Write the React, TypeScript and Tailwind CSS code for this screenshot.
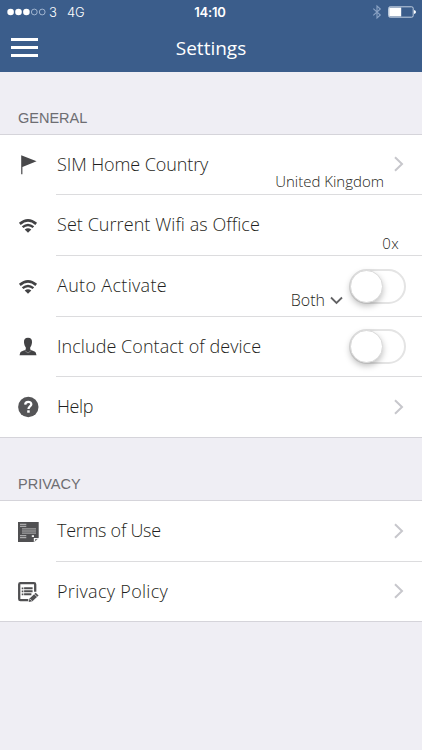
import React, { useState } from "react";

const FlagIcon = () => (
  <svg width="22" height="22" viewBox="0 0 22 22" fill="#48484a">
    <path d="M4.2 1.2L19.6 7.2L5.4 13V20.3H4.2Z" />
  </svg>
);

const WifiIcon = () => (
  <svg width="22" height="22" viewBox="0 0 22 22" fill="none" stroke="#424244">
    <path d="M2.8 8.9Q11 1.9 19.2 8.9" strokeWidth="2.7" />
    <path d="M5.6 12.2Q11 7.6 16.4 12.2" strokeWidth="2.4" />
    <path d="M7.7 14.4Q11 11.9 14.3 14.4L11 17.8Z" fill="#424244" stroke="none" />
  </svg>
);

const PersonIcon = () => (
  <svg width="22" height="22" viewBox="0 0 22 22" fill="#424244">
    <path d="M11 1.8C8 1.8 6.7 3.8 7 6.6C7.2 8.8 8 10.5 8.8 11.5V13.3C8 14.8 4 15 3.3 16.6L2.5 19.3H19.5L18.7 16.6C18 15 14 14.8 13.2 13.3V11.5C14 10.5 14.8 8.8 15 6.6C15.3 3.8 14 1.8 11 1.8Z" />
    <path d="M8.1 14.8L11 17L13.9 14.8" fill="none" stroke="#aaa" strokeWidth="0.6" />
  </svg>
);

const HelpIcon = () => (
  <svg width="22" height="22" viewBox="0 0 22 22" fill="none">
    <circle cx="11.3" cy="11" r="10.2" fill="#555557" />
    <path
      d="M8.2 8.6C8.3 4.9 14.3 4.9 14.3 8.3C14.3 10.5 11.5 10.5 11.5 13"
      stroke="#fff"
      strokeWidth="2.3"
    />
    <rect x="10.2" y="14.3" width="2.5" height="2.4" fill="#fff" />
  </svg>
);

const TermsIcon = () => (
  <svg width="22" height="22" viewBox="0 0 22 22" fill="none">
    <path d="M1 1H21.7V16.8L17.2 21H1Z" fill="#505052" />
    <path d="M3 3.3H9.3M3 5.3H9.3M3 14.7H9.3M3 16.7H9.3" stroke="#ddd" strokeWidth="0.8" />
    <path d="M5 7.9H19M5 10H19M5 12.1H19" stroke="#b5b5b5" strokeWidth="1" />
    <path d="M14.8 14.2H17V16H14.8Z" fill="#eee" />
    <path d="M16.8 21.2V17H21.8Z" fill="#fff" />
    <path d="M17.8 20.4L18.2 18.1L20.8 17.7Z" fill="#777" />
  </svg>
);

const PolicyIcon = () => (
  <svg width="22" height="22" viewBox="0 0 22 22" fill="none">
    <path
      d="M11.3 19.2H3.4Q2.2 19.2 2.2 18V3.4Q2.2 2.2 3.4 2.2H17Q18.2 2.2 18.2 3.4V10.8"
      stroke="#505052"
      strokeWidth="2.3"
    />
    <path d="M4.7 7.3H6.4M4.7 10.3H6.4M4.7 13.3H6.4" stroke="#505052" strokeWidth="1.7" />
    <path d="M7.1 7.3H15.6M7.1 10.3H15.6M7.1 13.3H14.4" stroke="#505052" strokeWidth="2" />
    <path d="M11.7 21L12.6 17.5L18.7 11.7L21.6 14.5L15.4 20.2Z" fill="#505052" />
    <path d="M17.2 12.9L20.2 15.9M13.1 18L14.9 19.8" stroke="#fff" strokeWidth="0.7" />
  </svg>
);

const Chevron = () => (
  <svg
    width="12"
    height="18"
    viewBox="0 0 12 18"
    fill="none"
    stroke="#c7c7cc"
    strokeWidth="2"
    className="mr-px mb-px"
  >
    <path d="M2 2.3L9 9L2 15.7" />
  </svg>
);

const Toggle = ({ label }: { label: string }) => {
  const [on, setOn] = useState(false);

  return (
    <button
      type="button"
      role="switch"
      aria-label={label}
      aria-checked={on}
      onClick={() => setOn(!on)}
      className={`flex h-[35px] w-[57px] items-center rounded-full border-2 border-[#e4e4e4] ${
        on ? "justify-end bg-green-500" : "bg-white"
      }`}
    >
      <span className="-mx-px size-[33px] shrink-0 rounded-full border border-[#dadada] bg-white shadow-[0_3px_6px_rgba(0,0,0,0.25)]" />
    </button>
  );
};

type RowProps = {
  icon: React.ReactNode;
  label: string;
  labelClass: string;
  className?: string;
  last?: boolean;
  children?: React.ReactNode;
};

const Row = ({ icon, label, labelClass, className = "h-[61px]", last, children }: RowProps) => (
  <li className={`flex pl-[17px] ${className}`}>
    <div className="flex w-[39px] shrink-0 items-center">{icon}</div>
    <div
      className={`flex flex-1 items-center justify-between pr-4 pl-px ${
        last ? "" : "border-b border-[#dcdcde]"
      }`}
    >
      <span className={`pb-0.5 text-[18px] leading-6 whitespace-nowrap ${labelClass}`}>{label}</span>
      {children}
    </div>
  </li>
);

const StatusBar = () => (
  <div className="grid h-6 grid-cols-3 items-center pl-[7px] pr-[6px] font-['Inter',sans-serif] text-[13px] leading-4 text-white">
    <div className="flex items-center">
      <svg width="39" height="10" viewBox="0 0 39 10" fill="#fff">
        <circle cx="3.6" cy="5" r="3.3" />
        <circle cx="11.5" cy="5" r="3.3" />
        <circle cx="19.4" cy="5" r="3.3" />
        <circle cx="27.3" cy="5" r="2.9" fill="none" stroke="#b9c9df" strokeWidth="0.8" />
        <circle cx="35.2" cy="5" r="2.9" fill="none" stroke="#b9c9df" strokeWidth="0.8" />
      </svg>
      <span className="ml-[3px]">3</span>
      <span className="ml-[10px]">4G</span>
    </div>
    <span className="pr-[3px] text-center font-semibold tracking-[-0.2px]">14:10</span>
    <div className="flex items-center justify-end gap-[6px]">
      <svg width="10" height="16" viewBox="0 0 10 16" fill="none" stroke="#8ba3c5" strokeWidth="1.1">
        <path d="M1.3 4.6L8.3 11L5 14V2L8.3 5L1.3 11.4" />
      </svg>
      <svg width="28" height="12" viewBox="0 0 28 12" fill="none">
        <rect x="0.6" y="0.8" width="24.6" height="10.4" rx="1.5" stroke="#c4d1e2" />
        <rect x="1.2" y="1.6" width="12" height="8.8" fill="#fff" />
        <path d="M26 4Q28 4.7 28 6Q28 7.3 26 8Z" fill="#fff" />
      </svg>
    </div>
  </div>
);

export default function App() {
  return (
    <main className="h-[750px] w-[422px] overflow-hidden bg-[#efeef4] font-['Open_Sans',sans-serif] font-light text-[#1f1f21]">
      <header className="h-[72px] bg-[#3b5d8b]">
        <StatusBar />
        <div className="grid h-[47px] grid-cols-3 items-center px-[11px] text-white">
          <button type="button" aria-label="Menu" className="flex w-[27px] flex-col gap-[5px]">
            <span className="h-[3px] bg-white" />
            <span className="h-[3px] bg-white" />
            <span className="h-[3px] bg-white" />
          </button>
          <h1 className="text-center text-[19px] leading-6 font-normal">Settings</h1>
        </div>
      </header>

      <h2 className="h-[62px] pt-[37px] pl-[18px] font-['Liberation_Sans',sans-serif] text-[14.5px] leading-[18px] font-normal text-[#6d6d72]">
        GENERAL
      </h2>
      <ul className="border-y border-[#d5d4da] bg-white">
        <Row icon={<FlagIcon />} label="SIM Home Country" labelClass="tracking-[-0.1px]" className="h-[60px]">
          <div className="flex h-full items-center gap-[9px]">
            <span className="self-end pb-[3px] text-[15px] leading-5">United Kingdom</span>
            <Chevron />
          </div>
        </Row>
        <Row icon={<WifiIcon />} label="Set Current Wifi as Office" labelClass="tracking-[0.06px]">
          <span className="mr-[7px] self-end pb-0.5 text-[15px] leading-5 tracking-[0.4px]">0x</span>
        </Row>
        <Row icon={<WifiIcon />} label="Auto Activate" labelClass="tracking-[0.32px]">
          <div className="flex h-full items-center gap-[6px]">
            <button type="button" className="flex items-center gap-[5px] self-end pb-[6px]">
              <span className="text-[16px] leading-5">Both</span>
              <svg width="13" height="9" viewBox="0 0 13 9" fill="none" stroke="#626264" strokeWidth="1.8">
                <path d="M1 1.5L6.5 7L12 1.5" />
              </svg>
            </button>
            <Toggle label="Auto Activate" />
          </div>
        </Row>
        <Row icon={<PersonIcon />} label="Include Contact of device" labelClass="tracking-[0.05px]" className="h-[60px]">
          <Toggle label="Include Contact of device" />
        </Row>
        <Row icon={<HelpIcon />} label="Help" labelClass="tracking-[-0.4px]" className="h-[60px]" last>
          <Chevron />
        </Row>
      </ul>

      <h2 className="h-[62px] pt-[37px] pl-[18px] font-['Liberation_Sans',sans-serif] text-[14.5px] leading-[18px] font-normal text-[#6d6d72]">
        PRIVACY
      </h2>
      <ul className="border-y border-[#d5d4da] bg-white">
        <Row icon={<TermsIcon />} label="Terms of Use" labelClass="tracking-[-0.28px]">
          <Chevron />
        </Row>
        <Row icon={<PolicyIcon />} label="Privacy Policy" labelClass="tracking-[0.3px]" className="h-[59px]" last>
          <Chevron />
        </Row>
      </ul>
    </main>
  );
}
